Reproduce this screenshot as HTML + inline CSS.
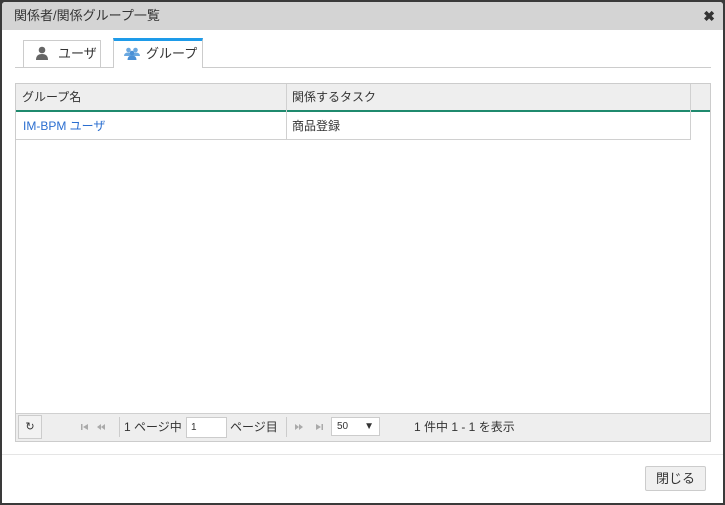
<!DOCTYPE html>
<html><head><meta charset="utf-8"><style>
*{box-sizing:border-box;margin:0;padding:0}
body{width:725px;height:505px;background:#3a3a3a;font-family:"Liberation Sans","Noto Sans CJK JP",sans-serif;font-size:12px;color:#333;position:relative;overflow:hidden}
.dlg{position:absolute;left:2px;top:2px;width:721px;height:501px;background:#fff;border-radius:3px 3px 0 0;overflow:hidden}
.title{position:absolute;left:0;top:0;width:721px;height:28px;background:#d4d4d4;font-size:13px;line-height:28px;padding-left:12px;color:#333}
.close{position:absolute;right:8px;top:0;font-size:14px;font-weight:bold;color:#333}
.abs{position:absolute}
.tab{position:absolute;border:1px solid #ccc;border-bottom:none;background:#fff;font-size:13px}
.grid{position:absolute;left:13px;top:81px;width:696px;height:359px;border:1px solid #ccc}
</style></head><body>
<div class="dlg">
<div class="title">関係者/関係グループ一覧<span class="close">✖</span></div>
<div class="abs" style="left:13px;top:65px;width:696px;height:1px;background:#ccc"></div>
<div class="tab" style="left:21px;top:38px;width:78px;height:27px;line-height:26px;padding-left:11px">
<svg width="14" height="14" viewBox="0 0 14 14" style="vertical-align:-2px"><circle cx="7" cy="4" r="3.3" fill="#666"/><path d="M1 14 Q1 8 7 8 Q13 8 13 14Z" fill="#666"/></svg><span style="margin-left:9px">ユーザ</span></div>
<div class="tab" style="left:111px;top:36px;width:90px;height:30px;border-top:3px solid #1e9be9;line-height:25px;padding-left:10px;background:#fff">
<svg width="16" height="14" viewBox="0 0 16 14" style="vertical-align:-2px"><circle cx="4.5" cy="4" r="2.3" fill="#6aa8e0"/><circle cx="11.5" cy="4" r="2.3" fill="#6aa8e0"/><path d="M0 10 Q0 6.5 4.5 6.5 Q9 6.5 9 10Z M7 10 Q7 6.5 11.5 6.5 Q16 6.5 16 10Z" fill="#6aa8e0"/><circle cx="8" cy="7" r="2.3" fill="#4a90d6"/><path d="M3.5 14 Q3.5 9.5 8 9.5 Q12.5 9.5 12.5 14Z" fill="#4a90d6"/></svg><span style="margin-left:6px">グループ</span></div>
<div class="grid">
<div class="abs" style="left:0;top:0;width:694px;height:28px;background:#eee;border-bottom:2px solid #1f8a6e"></div>
<div class="abs" style="left:6px;top:0;line-height:27px;font-size:12px">グループ名</div>
<div class="abs" style="left:270px;top:0;width:1px;height:55px;background:#d0d0d0"></div>
<div class="abs" style="left:276px;top:0;line-height:27px">関係するタスク</div>
<div class="abs" style="left:674px;top:0;width:1px;height:55px;background:#d0d0d0"></div>
<div class="abs" style="left:0;top:55px;width:675px;height:1px;background:#d0d0d0"></div>
<div class="abs" style="left:7px;top:29px;line-height:26px;color:#2a6ed0">IM-BPM ユーザ</div>
<div class="abs" style="left:276px;top:29px;line-height:26px">商品登録</div>
<div class="abs" style="left:0;top:329px;width:694px;height:28px;background:#eee;border-top:1px solid #d0d0d0"></div>
<div class="abs" style="left:2px;top:331px;width:24px;height:24px;border:1px solid #ccc;background:#f2f2f2;text-align:center;line-height:22px;font-size:11px">↻</div>
<svg class="abs" style="left:64px;top:339px" width="30" height="8" viewBox="0 0 30 8"><rect x="1" y="1" width="1.5" height="6" fill="#aaa"/><path d="M8 1 L3 4 L8 7Z" fill="#aaa"/><path d="M21 1 L17 4 L21 7Z M25 1 L21 4 L25 7Z" fill="#aaa"/></svg>
<div class="abs" style="left:103px;top:333px;width:1px;height:20px;background:#ccc"></div>
<div class="abs" style="left:108px;top:329px;line-height:28px">1 ページ中</div>
<div class="abs" style="left:170px;top:333px;width:41px;height:21px;border:1px solid #ccc;background:#fff;font-size:10px;line-height:19px;padding-left:4px">1</div>
<div class="abs" style="left:214px;top:329px;line-height:28px">ページ目</div>
<div class="abs" style="left:270px;top:333px;width:1px;height:20px;background:#ccc"></div>
<svg class="abs" style="left:278px;top:339px" width="32" height="8" viewBox="0 0 32 8"><path d="M1 1 L5 4 L1 7Z M5 1 L9 4 L5 7Z" fill="#aaa"/><path d="M22 1 L27 4 L22 7Z" fill="#aaa"/><rect x="27.5" y="1" width="1.5" height="6" fill="#aaa"/></svg>
<div class="abs" style="left:315px;top:333px;width:49px;height:19px;border:1px solid #ccc;background:#fff;font-size:10px;line-height:17px;padding-left:5px">50<span style="position:absolute;right:5px">▼</span></div>
<div class="abs" style="left:398px;top:329px;line-height:28px">1 件中 1 - 1 を表示</div>
</div>
<div class="abs" style="left:0;top:452px;width:721px;height:1px;background:#e5e5e5"></div>
<div class="abs" style="left:643px;top:464px;width:61px;height:25px;border:1px solid #ccc;background:#f0f0f0;border-radius:2px;text-align:center;line-height:23px;font-size:13px">閉じる</div>
</div>
</body></html>
